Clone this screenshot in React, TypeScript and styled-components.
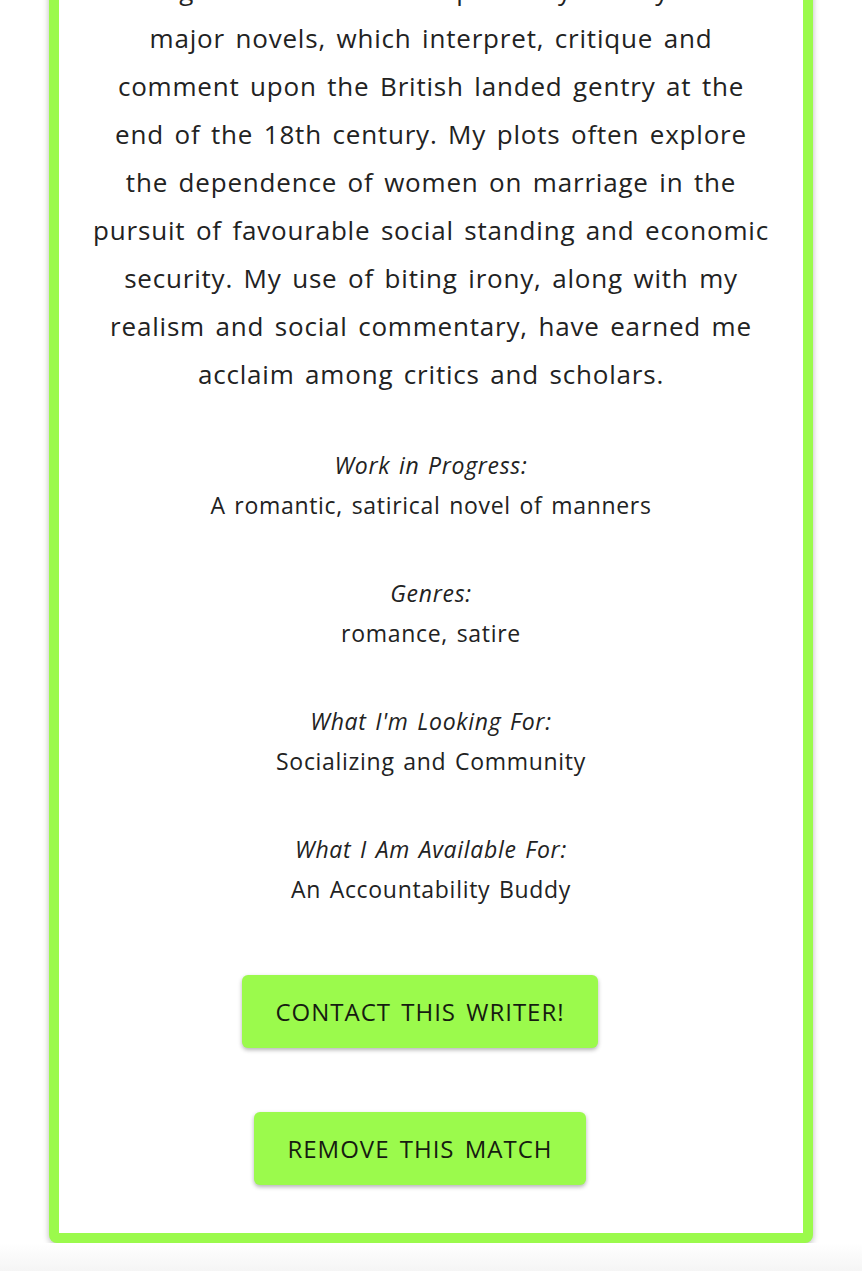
import React from 'react'
import styled, { createGlobalStyle } from 'styled-components'

const GlobalStyle = createGlobalStyle`
  html, body {
    margin: 0;
    padding: 0;
    background: #ffffff;
  }
  body {
    font-family: "Open Sans", "Noto Sans", sans-serif;
    color: #222222;
    overflow: hidden;
  }
`

const green = '#9bfa4c'

const Page = styled.div`
  display: flex;
  flex-direction: column;
  align-items: stretch;
  height: 1271px;
`

const Card = styled.section`
  margin: -84px 49px 0;
  border: 10px solid ${green};
  border-radius: 8px;
  background: #ffffff;
  box-shadow: 0 2px 6px rgba(0, 0, 0, 0.28);
  padding: 40px 10px 48px;
  display: flex;
  flex-direction: column;
  align-items: center;
`

const Bio = styled.p`
  margin: 0;
  font-size: 26px;
  line-height: 48px;
  text-align: center;
  letter-spacing: 0.8px;
  word-spacing: 3px;
`

const Detail = styled.div`
  margin-top: 47px;
  text-align: center;
  font-size: 23px;
  line-height: 40px;
  letter-spacing: 0.7px;
  word-spacing: 2px;
  &:nth-of-type(n + 2) {
    margin-top: 48px;
  }
`

const Label = styled.div`
  font-style: italic;
`

const Value = styled.div``

// buttons sit a little left of the card's centre line
const Actions = styled.div`
  display: flex;
  flex-direction: column;
  align-items: center;
  gap: 64px;
  margin-top: 66px;
  padding-right: 22px;
`

const Button = styled.button`
  height: 73px;
  padding: 0 33px;
  border: none;
  border-radius: 6px;
  background: ${green};
  color: #161c10;
  font-family: "Open Sans", "Noto Sans", sans-serif;
  font-size: 24px;
  letter-spacing: 1px;
  word-spacing: 3px;
  text-transform: uppercase;
  box-shadow: 0 2px 4px rgba(0, 0, 0, 0.3);
  cursor: pointer;
`

const Fade = styled.div`
  flex: 1;
  background: linear-gradient(#ffffff, #f5f5f5);
`

const bioLines = [
  'English novelist known primarily for my six',
  'major novels, which interpret, critique and',
  'comment upon the British landed gentry at the',
  'end of the 18th century. My plots often explore',
  'the dependence of women on marriage in the',
  'pursuit of favourable social standing and economic',
  'security. My use of biting irony, along with my',
  'realism and social commentary, have earned me',
  'acclaim among critics and scholars.',
]

const details = [
  { label: 'Work in Progress:', value: 'A romantic, satirical novel of manners' },
  { label: 'Genres:', value: 'romance, satire' },
  { label: "What I'm Looking For:", value: 'Socializing and Community' },
  { label: 'What I Am Available For:', value: 'An Accountability Buddy' },
]

const App: React.FunctionComponent = () => (
  <Page>
    <GlobalStyle />
    <Card>
      <Bio>
        {bioLines.map((line, i) => (
          <React.Fragment key={i}>
            {line}
            {i < bioLines.length - 1 && <br />}
          </React.Fragment>
        ))}
      </Bio>
      {details.map((d) => (
        <Detail key={d.label}>
          <Label>{d.label}</Label>
          <Value>{d.value}</Value>
        </Detail>
      ))}
      <Actions>
        <Button>Contact this writer!</Button>
        <Button>Remove this match</Button>
      </Actions>
    </Card>
    <Fade />
  </Page>
)

export default App
